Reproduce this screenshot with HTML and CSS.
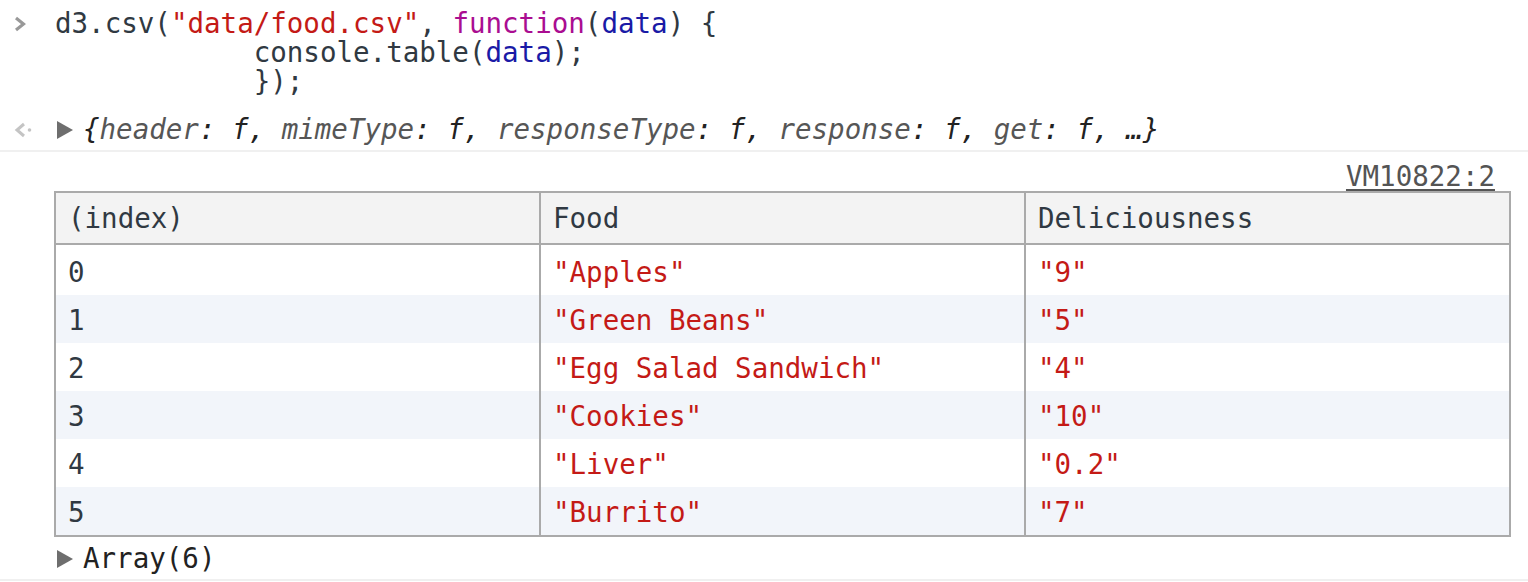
FILE: index.html
```html
<!DOCTYPE html>
<html>
<head>
<meta charset="utf-8">
<link rel="stylesheet" href="styles.css">
</head>
<body>
<div class="console">
  <div class="msg msg-input">
    <span class="gutter">
      <svg class="prompt" width="12" height="16" viewBox="0 0 12 16"><path d="M2 2 L9.5 8 L2 14" fill="none" stroke="#999999" stroke-width="3.2"/></svg>
    </span>
    <pre class="code">d3.csv(<span class="str">"data/food.csv"</span>, <span class="kw">function</span>(<span class="var">data</span>) {
            console.table(<span class="var">data</span>);
            });</pre>
  </div>

  <div class="msg msg-result">
    <span class="gutter">
      <svg class="result-icon" width="20" height="16" viewBox="0 0 20 16"><path d="M10 2 L3 8 L10 14" fill="none" stroke="#c4c4c4" stroke-width="3"/><circle cx="15.5" cy="8" r="1.8" fill="#c4c4c4"/></svg>
    </span>
    <span class="toggle"><svg width="16" height="18" viewBox="0 0 16 18"><path d="M0 0 L16 9 L0 18 Z" fill="#6e6e6e"/></svg></span>
    <span class="preview">{<span class="key">header</span>: f, <span class="key">mimeType</span>: f, <span class="key">responseType</span>: f, <span class="key">response</span>: f, <span class="key">get</span>: f, …}</span>
  </div>

  <div class="msg msg-table">
    <div class="source"><span class="link">VM10822:2</span></div>
    <table class="grid">
      <thead>
        <tr><th>(index)</th><th>Food</th><th>Deliciousness</th></tr>
      </thead>
      <tbody>
        <tr class="first"><td>0</td><td class="str">"Apples"</td><td class="str">"9"</td></tr>
        <tr><td>1</td><td class="str">"Green Beans"</td><td class="str">"5"</td></tr>
        <tr><td>2</td><td class="str">"Egg Salad Sandwich"</td><td class="str">"4"</td></tr>
        <tr><td>3</td><td class="str">"Cookies"</td><td class="str">"10"</td></tr>
        <tr><td>4</td><td class="str">"Liver"</td><td class="str">"0.2"</td></tr>
        <tr><td>5</td><td class="str">"Burrito"</td><td class="str">"7"</td></tr>
      </tbody>
    </table>
    <div class="array-line">
      <span class="toggle"><svg width="16" height="18" viewBox="0 0 16 18"><path d="M0 0 L16 9 L0 18 Z" fill="#6e6e6e"/></svg></span>
      <span class="array">Array(6)</span>
    </div>
  </div>
</div>
</body>
</html>
```

FILE: styles.css
```css
html, body {
  margin: 0;
  padding: 0;
  background: #ffffff;
}

.console {
  font-family: "DejaVu Sans Mono", "Liberation Mono", monospace;
  font-size: 27.5px;
  line-height: 29px;
  color: #303942;
}

.msg {
  display: flex;
  align-items: flex-start;
  border-bottom: 2px solid #f0f0f0;
}

.gutter {
  width: 55px;
  flex: none;
  display: flex;
  align-items: center;
  height: 29px;
}

.prompt {
  margin-left: 14px;
}

.result-icon {
  margin-left: 14px;
}

.msg-input {
  padding-top: 9px;
  border-bottom: none;
}

.code {
  margin: 0;
  font: inherit;
  white-space: pre;
}

.str { color: #c41a16; }
.kw { color: #aa0d91; }
.var { color: #1a1aa6; }

.msg-result {
  margin-top: 19px;
  padding-bottom: 6px;
}

.msg-result .gutter {
  width: 57px;
}

.toggle {
  width: 26px;
  flex: none;
  height: 29px;
  display: flex;
  align-items: center;
}

.preview {
  font-style: italic;
  color: #222222;
  white-space: pre;
}

.key {
  color: #565656;
}

.msg-table {
  flex-direction: column;
  align-items: stretch;
  padding: 10px 17px 6px 54px;
}

.source {
  display: flex;
  justify-content: flex-end;
  padding-right: 16px;
}

.link {
  color: #545454;
  text-decoration: underline;
  text-underline-offset: 3px;
}

.grid {
  border-collapse: collapse;
  table-layout: fixed;
  width: 100%;
  border: 2px solid #aaaaaa;
}

.grid th,
.grid td {
  text-align: left;
  font-weight: normal;
  padding: 0 12px;
  border-left: 2px solid #aaaaaa;
  white-space: pre;
}

.grid th {
  height: 50px;
  background: #f3f3f3;
  border-bottom: 2px solid #aaaaaa;
  color: #303942;
}

.grid td {
  height: 46px;
  padding-top: 2px;
}

.grid tr.first td {
  padding-top: 4px;
  height: 46px;
}

.grid tbody tr:nth-child(even) td {
  background: #f2f5fa;
}

.array-line {
  display: flex;
  align-items: center;
  margin-top: 7px;
  margin-left: 3px;
}

.array {
  color: #222222;
}
```
